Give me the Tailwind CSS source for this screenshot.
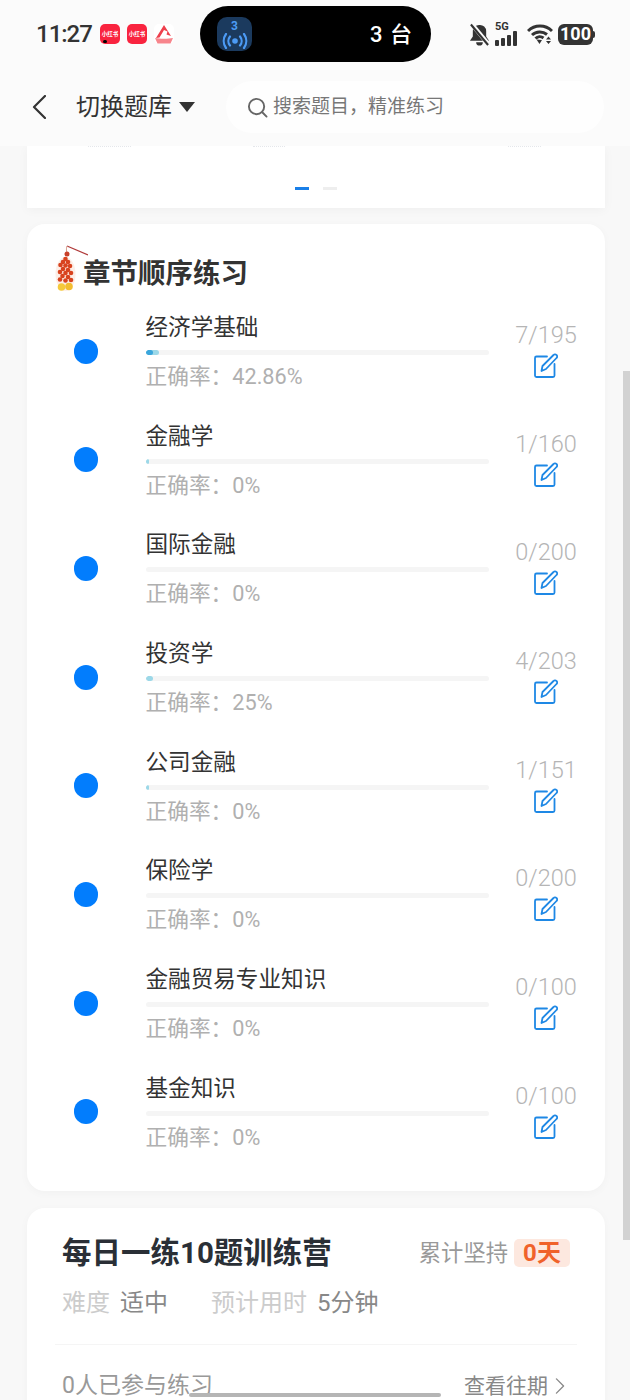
<!doctype html>
<html>
<head>
  <title>章节顺序练习</title>
  <meta charset="UTF-8">
  <meta name="viewport" content="width=device-width, initial-scale=1.0">
  <script src="https://cdn.jsdelivr.net/npm/@tailwindcss/browser@4"></script>
</head>
<body class="font-['Roboto','Noto_Sans_CJK_SC',sans-serif]">
  <div class="relative w-[630px] h-[1400px] overflow-hidden bg-[#f8f8f8]">

    <!-- Status bar + nav -->
    <div class="relative z-10 h-[146px] bg-[#fbfbfb]">
      <div class="flex items-center h-[56px] pt-[6px] pl-[36px] box-content">
        <span class="w-[54px] text-[24px] leading-[28px] font-medium text-[#333] tracking-[-1px]">11:27</span>
        <div class="ml-[10px] flex gap-[7px]">
          <div class="relative flex items-center justify-center w-[20px] h-[20px] rounded-[5px] bg-[#f9243f] text-[5.5px] font-bold text-white">小红书<span class="absolute left-[3px] bottom-[1px] w-[4px] h-[3px] rounded-full bg-black"></span></div>
          <div class="flex items-center justify-center w-[20px] h-[20px] rounded-[5px] bg-[#f9243f] text-[5.5px] font-bold text-white">小红书</div>
          <div class="w-[20px] h-[20px] rounded-[5px] bg-white">
            <svg viewBox="0 0 20 20" class="w-[20px] h-[20px]"><path d="M10 1L17 12L12.500 10.500L13.500 7.500L10 6L5.500 13.500L2 14z" fill="#ee3f4c"/><path d="M1 14C6 15 14 15 19 14L16.500 19.500H3.500z" fill="#f7858c"/></svg>
          </div>
        </div>
        <!-- Island -->
        <div class="ml-[26px] flex items-center justify-between w-[231px] h-[56px] rounded-full bg-black pl-[17px] pr-[18px]">
          <div class="flex flex-col items-center w-[35px] h-[34px] rounded-[10px] bg-[#1b3a5e] text-[#4c9bf5]">
            <span class="text-[12px] leading-[11px] mt-[4px] font-bold">3</span>
            <svg viewBox="0 0 26 16" fill="none" stroke="currentColor" stroke-width="2.200" stroke-linecap="round" class="w-[26px] h-[16px] mt-[1px]">
              <circle cx="13" cy="8" r="2.800" fill="currentColor" stroke="none"/>
              <path d="M8 3.500a7 7 0 0 0 0 9M18 3.500a7 7 0 0 1 0 9M4 1a12 12 0 0 0 0 14M22 1a12 12 0 0 1 0 14"/>
            </svg>
          </div>
          <span class="text-[22px] font-medium text-white tracking-[1px]">3 台</span>
        </div>
        <!-- Right status icons -->
        <div class="ml-[38px] flex items-center text-[#333]">
          <svg viewBox="0 0 22 24" class="w-[21px] h-[23px]" fill="currentColor">
            <path d="M11 2a6.500 6.500 0 0 1 7 6.500v5.500l3 4.500H1l3-4.500V8.500A6.500 6.500 0 0 1 11 2zM7.500 20h7a3.500 3.500 0 0 1-7 0z"/>
            <path d="M2 0L21 23" stroke="#fbfbfb" stroke-width="4.500"/>
            <path d="M2 1.500L20 23" stroke="currentColor" stroke-width="2.200"/>
          </svg>
          <div class="relative ml-[5px] w-[25px] h-[23px]">
            <span class="absolute left-0 -top-[2px] text-[11px] leading-[11px] font-bold">5G</span>
            <div class="absolute left-0 bottom-0 flex items-end gap-[2px]">
              <span class="w-[4px] h-[6px] rounded-[1px] bg-[#333]"></span>
              <span class="w-[4px] h-[8px] rounded-[1px] bg-[#333]"></span>
              <span class="w-[4px] h-[11px] rounded-[1px] bg-[#333]"></span>
              <span class="w-[4px] h-[15px] rounded-[1px] bg-[#333]"></span>
            </div>
          </div>
          <svg viewBox="0 0 26 21" class="ml-[7px] w-[26px] h-[21px]" fill="none" stroke="currentColor" stroke-width="3">
            <path d="M1 7a17 17 0 0 1 24 0M5 11a11.500 11.500 0 0 1 15 -.5M8.500 14.500a6 6 0 0 1 8 -.5"/>
            <path d="M9.500 15.500L12.500 20L15 16z" fill="currentColor" stroke="none"/>
            <path d="M19 15.500h5l-2.500-3zM19 17h5l-2.500 3z" fill="currentColor" stroke="none"/>
          </svg>
          <div class="ml-[5px] flex items-center">
            <div class="flex items-center justify-center w-[35px] h-[21px] rounded-[6px] bg-[#333] text-[18px] font-bold text-white leading-none">100</div>
            <span class="w-[2px] h-[7px] rounded-r-[2px] bg-[#333]"></span>
          </div>
        </div>
      </div>

      <div class="flex items-center h-[52px] mt-[19px] pl-[32px]">
        <svg viewBox="0 0 14 24" fill="none" stroke="#333" stroke-width="2.200" stroke-linecap="round" stroke-linejoin="round" class="w-[14px] h-[24px]"><path d="M13 1L2 12L13 23"/></svg>
        <span class="ml-[30px] text-[24px] leading-[30px] text-[#333]">切换题库</span>
        <span class="ml-[7px] w-0 h-0 border-x-[8px] border-x-transparent border-t-[10px] border-t-[#333]"></span>
        <div class="ml-[31px] flex items-center w-[378px] h-[52px] rounded-full bg-[#fefefe] pl-[21px]">
          <svg viewBox="0 0 22 22" fill="none" stroke="#666" stroke-width="2" stroke-linecap="round" class="w-[21px] h-[21px]"><circle cx="10" cy="10" r="8"/><path d="M16 16l4.500 4.500"/></svg>
          <span class="ml-[5px] text-[19px] leading-[24px] text-[#777]">搜索题目，精准练习</span>
        </div>
      </div>
    </div>

    <!-- Page content -->
    <div class="flex flex-col pl-[27px] pr-[25px]">
      <!-- Scrolled-off top card -->
      <div class="h-[62px] bg-white shadow-[0_2px_10px_rgba(0,0,0,0.04)]">
        <div class="flex h-[2px] pl-[61px]">
          <span class="w-[43px] h-px border-t border-dotted border-gray-200"></span>
          <span class="ml-[122px] w-[32px] h-px border-t border-dotted border-gray-200"></span>
          <span class="ml-[223px] w-[33px] h-px border-t border-dotted border-gray-200"></span>
        </div>
        <div class="flex justify-center gap-[14px] mt-[39px]">
          <span class="w-[14px] h-[3px] bg-[#1a7fe8]"></span>
          <span class="w-[14px] h-[3px] bg-[#eeeeee]"></span>
        </div>
      </div>

      <!-- Chapter practice -->
      <div class="mt-[16px] h-[967px] rounded-[18px] bg-white shadow-[0_2px_10px_rgba(0,0,0,0.03)]">
        <div class="flex items-start h-[86px] pl-[28px]">
          <svg viewBox="0 0 33 47" class="mt-[21px] -mr-[5px] w-[33px] h-[47px] shrink-0">
            <path d="M12 1L33 10" stroke="#b03a3a" stroke-width="1.300"/>
            <path d="M12 1C11 4 11.500 6 12 9" stroke="#d9a08f" stroke-width="1" fill="none"/>
            <circle cx="12" cy="9" r="2.500" fill="#c8402a"/>
            <ellipse cx="10.500" cy="29" rx="10" ry="17" fill="#fdeee7"/>
            <g fill="#d8431f">
              <circle cx="10.500" cy="14" r="2.300"/><circle cx="8" cy="17" r="2.300"/><circle cx="13" cy="17" r="2.300"/>
              <circle cx="5.500" cy="20" r="2.300"/><circle cx="10.500" cy="20.500" r="2.300"/><circle cx="15" cy="21" r="2.300"/>
              <circle cx="8" cy="24" r="2.300"/><circle cx="13" cy="25" r="2.300"/><circle cx="5" cy="27" r="2.300"/>
              <circle cx="10.500" cy="28" r="2.300"/><circle cx="16" cy="28" r="2.300"/><circle cx="7.500" cy="31" r="2.300"/>
              <circle cx="13" cy="32" r="2.300"/><circle cx="5" cy="34.500" r="2.300"/><circle cx="10.500" cy="35.500" r="2.300"/><circle cx="16" cy="35" r="2.300"/>
            </g>
            <circle cx="6.500" cy="42" r="3.800" fill="#f5c93c"/><circle cx="14" cy="41.500" r="3.800" fill="#f3bd30"/>
          </svg>
          <h2 class="mt-[30px] text-[27.5px] leading-[40px] font-bold text-[#333]">章节顺序练习</h2>
        </div>
        <div id="rows"></div>
      </div>

      <!-- Daily practice -->
      <div class="mt-[17px] h-[300px] rounded-t-[18px] bg-white shadow-[0_2px_10px_rgba(0,0,0,0.03)] pt-[25px]">
        <div class="flex items-center justify-between h-[40px] pl-[35px] pr-[35px]">
          <h2 class="text-[29.500px] leading-[40px] font-bold text-[#2a2f36]">每日一练10题训练营</h2>
          <div class="flex items-center">
            <span class="text-[22.3px] leading-[30px] text-[#999]">累计坚持</span>
            <span class="ml-[6px] w-[56px] h-[28px] rounded-[5px] bg-[#fde8df] text-center text-[24px] leading-[28px] font-bold text-[#f0622a]">0天</span>
          </div>
        </div>
        <div class="flex items-center h-[28px] mt-[16px] pl-[35px] text-[24px] leading-[28px]">
          <span class="text-[#cccccc]">难度</span>
          <span class="ml-[10px] text-[#888]">适中</span>
          <span class="ml-[43px] text-[#cccccc]">预计用时</span>
          <span class="ml-[10px] text-[#888]">5分钟</span>
        </div>
        <div class="mt-[27px] mx-[28px] h-px bg-[#f5f5f5]"></div>
        <div class="flex items-center justify-between h-[30px] mt-[26px] pl-[35px] pr-[40px]">
          <span class="text-[23px] leading-[30px] text-[#999]">0人已参与练习</span>
          <div class="flex items-center">
            <span class="text-[21px] leading-[30px] text-[#888]">查看往期</span>
            <svg viewBox="0 0 10 18" fill="none" stroke="#888" stroke-width="1.500" stroke-linecap="round" stroke-linejoin="round" class="ml-[7px] w-[10px] h-[16px]"><path d="M1 1L9 9L1 17"/></svg>
          </div>
        </div>
      </div>
    </div>

    <!-- Scrollbar, home indicator -->
    <div class="absolute right-0 top-[371px] w-[7px] h-[869px] bg-[#d2d2d2]"></div>
    <div class="absolute left-[189px] top-[1393px] w-[252px] h-[4px] rounded-full bg-[#b5b5b5]"></div>
  </div>

  <script>
    const chapters = [
      { name: '经济学基础', done: '7/195', rate: '42.86%', fill: 13, inner: 7 },
      { name: '金融学', done: '1/160', rate: '0%', fill: 3, inner: 0 },
      { name: '国际金融', done: '0/200', rate: '0%', fill: 0, inner: 0 },
      { name: '投资学', done: '4/203', rate: '25%', fill: 7, inner: 0 },
      { name: '公司金融', done: '1/151', rate: '0%', fill: 3, inner: 0 },
      { name: '保险学', done: '0/200', rate: '0%', fill: 0, inner: 0 },
      { name: '金融贸易专业知识', done: '0/100', rate: '0%', fill: 0, inner: 0 },
      { name: '基金知识', done: '0/100', rate: '0%', fill: 0, inner: 0 },
    ];

    document.querySelector('#rows').innerHTML = chapters.map((c) => `
      <div class="flex items-start h-[108.7px]">
        <span class="ml-[46.5px] mt-[28.5px] w-[24.5px] h-[25px] shrink-0 rounded-full bg-[#027dfd]"></span>
        <div class="ml-[47.5px] w-[343px] shrink-0">
          <div class="text-[22.6px] leading-[36px] text-[#333]">${c.name}</div>
          <div class="relative mt-[4px] h-[5px] rounded-full bg-[#f5f5f5] overflow-hidden">
            <div class="absolute left-0 top-0 h-[5px] rounded-full bg-[#9cd8e8]" style="width:${c.fill}px"></div>
            <div class="absolute left-0 top-0 h-[5px] rounded-full bg-[#3ba6dc]" style="width:${c.inner}px"></div>
          </div>
          <div class="mt-[4px] text-[21.7px] leading-[36px] text-[#b0b0b0]">正确率：${c.rate}</div>
        </div>
        <div class="w-[115px] flex flex-col items-center">
          <div class="mt-[8px] text-[23.5px] leading-[34px] font-light text-[#b5b5b5]">${c.done}</div>
          <svg viewBox="0 0 24 25" fill="none" stroke="#1e88e5" stroke-width="1.800" stroke-linecap="round" stroke-linejoin="round" class="mt-[1px] w-[24px] h-[25px]">
            <path d="M13 3.500H2.500A1.500 1.500 0 0 0 1 5V22.500A1.500 1.500 0 0 0 2.500 24H19A1.500 1.500 0 0 0 20.500 22.500V11"/>
            <path d="M7.500 18L8.500 13L19.500 2A2 2 0 0 1 22.500 2A2 2 0 0 1 22.500 5L12 16z"/>
          </svg>
        </div>
      </div>
    `).join('');
  </script>
</body>
</html>
